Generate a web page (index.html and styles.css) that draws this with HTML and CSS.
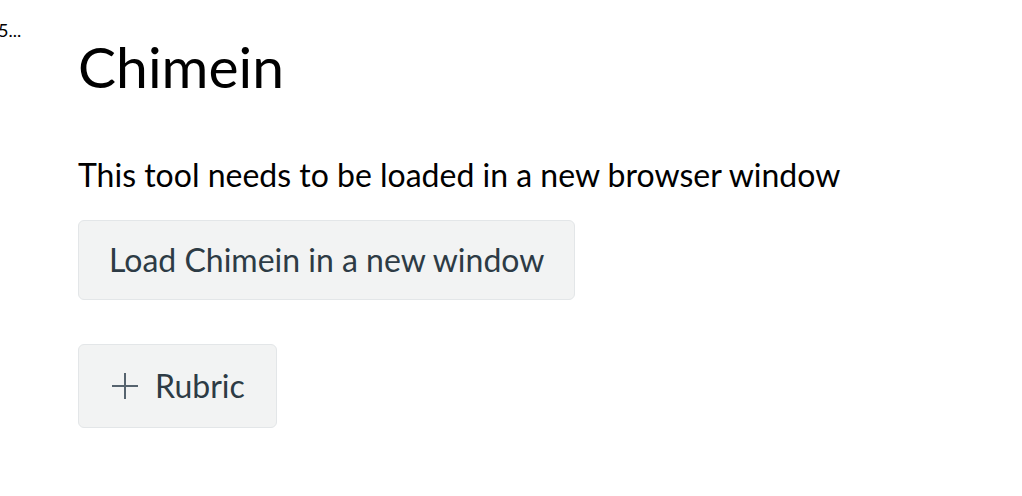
FILE: index.html
```html
<!DOCTYPE html>
<html>
<head>
<meta charset="utf-8">
<link rel="stylesheet" href="styles.css">
</head>
<body>
<div class="crumb">5...</div>
<main class="content">
  <h1 class="title">Chimein</h1>
  <p class="lead">This tool needs to be loaded in a new browser window</p>
  <button class="btn btn-load">Load Chimein in a new window</button>
  <button class="btn btn-rubric"><svg class="plus" width="26" height="26" viewBox="0 0 26 26"><path d="M13 0V26M0 13H26" stroke="#56636e" stroke-width="2"/></svg><span>Rubric</span></button>
</main>
</body>
</html>
```
FILE: styles.css
```css
html, body { margin: 0; padding: 0; background: #fff; }
body { font-family: Lato, "Noto Sans", sans-serif; color: #000; position: relative; width: 1022px; height: 496px; overflow: hidden; }
.crumb { position: absolute; left: -2px; top: 19px; font-size: 18px; line-height: 22px; color: #000; }
.content { padding: 32px 0 0 78px; display: flex; flex-direction: column; align-items: flex-start; }
.title { margin: 0; font-size: 57px; font-weight: 400; line-height: 68px; color: #000; }
.lead { margin: 56px 0 0; font-size: 32px; line-height: 38px; color: #000; }
.btn { font-family: Lato, "Noto Sans", sans-serif; background: #f2f3f3; border: 1px solid #e3e6e8; border-radius: 6px; color: #2d3b45; font-size: 32px; line-height: 38px; cursor: pointer; }
.btn-load { margin-top: 26px; height: 80px; padding: 0 30px; }
.btn-rubric { margin-top: 44px; height: 84px; padding: 0 31px 0 33px; display: flex; align-items: center; gap: 17px; }
.plus { display: block; }
```
